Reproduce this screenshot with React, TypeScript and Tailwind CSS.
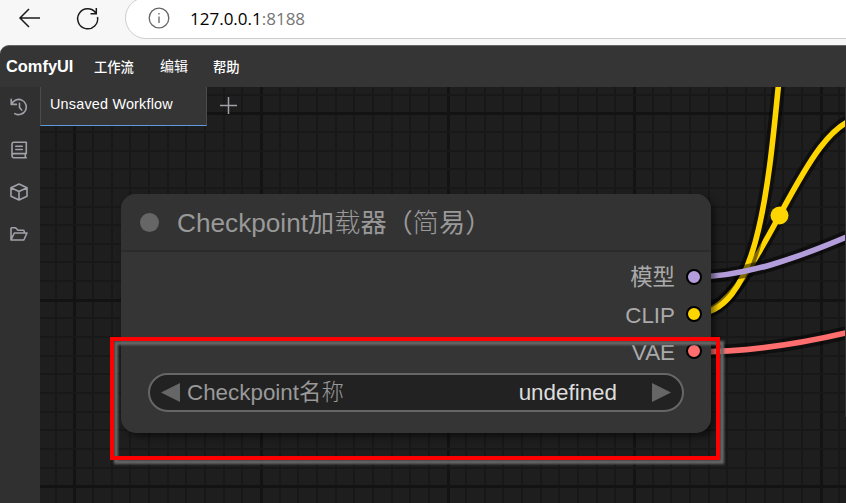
import type { ReactNode } from "react";

const CELL = 18.66;

function range(from: number, to: number) {
  return Array.from({ length: to - from + 1 }, (_, i) => from + i);
}

function Canvas() {
  return (
    <svg className="absolute inset-0" width="846" height="416" viewBox="0 87 846 416" fill="none">
      {range(-2, 42).map((i) => (
        <rect key={`v${i}`} x={Math.round(73.3 + i * CELL)} y="87" width={i % 10 === 0 ? 3 : 2} height="416" fill={i % 10 === 0 ? "#131313" : "#181818"} />
      ))}
      {range(-1, 21).map((i) => (
        <rect key={`h${i}`} x="0" y={Math.round(112.2 + i * CELL)} width="846" height={i % 10 === 0 ? 3 : 2} fill={i % 10 === 0 ? "#131313" : "#181818"} />
      ))}
      <Link d="M694 314 C759 314 800 117 865 117" color="#ffd500" />
      <circle cx="779.5" cy="215.5" r="9" fill="#ffd500" />
      <Link d="M694 314 C818 314 740 -150 862 -150" color="#ffd500" />
      <Link d="M694 277 C745 277 797 258 850 235.5" color="#b39ddb" />
      <Link d="M694 352 C750 352 800 344 850 332" color="#ff6e6e" />
      <rect x="845" y="87" width="1" height="330" fill="#333" />
    </svg>
  );
}

function Link({ d, color }: { d: string; color: string }) {
  return (
    <>
      <path d={d} stroke="#000" strokeOpacity="0.5" strokeWidth="13" />
      <path d={d} stroke={color} strokeWidth="5.6" />
    </>
  );
}

function Icon({ children }: { children: ReactNode }) {
  return (
    <svg width="18" height="18" viewBox="0 0 18 18" fill="none" stroke="#a1a1aa" strokeWidth="1.6" strokeLinecap="round" strokeLinejoin="round">
      {children}
    </svg>
  );
}

function Output({ label, dot }: { label: string; dot: string }) {
  return (
    <div className="flex h-[37.4px] items-center justify-end gap-[11px] pr-[9px] text-[22.4px] leading-none text-[#aaa]">
      <span className="pt-[4px]">{label}</span>
      <span className={`size-4 rounded-full border-2 border-black ${dot}`} />
    </div>
  );
}

function Node() {
  return (
    <div className="absolute left-[121px] top-[107px] flex h-[239px] w-[590px] flex-col overflow-hidden rounded-[15px] bg-[#353535]">
      <div className="flex h-[58px] shrink-0 items-center border-b-2 border-[#2b2b2b] bg-[#333] pl-[19px]">
        <span className="size-[19px] rounded-full bg-[#666]" />
        <span className="ml-[18px] whitespace-nowrap pt-[3px] text-[26.2px] leading-none text-[#999]">
          Checkpoint加<span className="font-light">载</span>器（<span className="font-light">简</span>易）
        </span>
      </div>
      <div className="flex flex-col pt-[6px]">
        <Output label="模型" dot="bg-[#b39ddb]" />
        <Output label="CLIP" dot="bg-[#ffd500]" />
        <Output label="VAE" dot="bg-[#ff6e6e]" />
      </div>
      <div className="ml-[27px] mt-[3px] flex h-[39px] w-[536px] items-center rounded-full border-2 border-[#666] bg-[#222] px-[11px] text-[22.4px] leading-none">
        <svg width="19" height="19" viewBox="0 0 19 19"><path d="M0 9.5 19 0V19Z" fill="#666" /></svg>
        <span className="ml-[7px] pt-[2px] text-[#999]">Checkpoint名<span className="font-light">称</span></span>
        <span className="ml-auto mr-[35px] pt-[2px] text-[#ddd]">undefined</span>
        <svg width="19" height="19" viewBox="0 0 19 19"><path d="M19 9.5 0 0V19Z" fill="#666" /></svg>
      </div>
    </div>
  );
}

export default function App() {
  return (
    <div className="flex h-[503px] w-[846px] flex-col overflow-hidden bg-[#f7f7f7] font-['Liberation_Sans','Noto_Sans_CJK_SC',sans-serif]">
      <div className="flex h-[45px] shrink-0 overflow-hidden">
        <svg className="shrink-0" width="125" height="40" fill="none" stroke="#1b1b1b" strokeWidth="1.5">
          <path d="M40 18H20M29 9 20 18l9 9" />
          <path d="M95.8 13A10 10 0 1 0 97.5 17M96.3 8v5.7h-5.8" />
        </svg>
        <div className="-mt-[3px] flex h-[42px] w-[760px] shrink-0 items-center rounded-l-full border border-[#cecece] bg-white pl-[22px]">
          <svg width="22" height="22" viewBox="0 0 22 22" fill="none" stroke="#666" strokeWidth="1.3">
            <circle cx="11" cy="11" r="9.8" /><path d="M11 9.5V16M11 6v1.6" />
          </svg>
          <span className="ml-5 pt-px font-['Open_Sans',sans-serif] text-[17px] text-black">127.0.0.1<span className="text-[#767676]">:8188</span></span>
        </div>
      </div>
      <div className="flex h-[42px] shrink-0 items-center rounded-tl-[9px] border-t border-[#666] bg-[#353535] pl-[6px] text-[13.3px] text-white">
        <span className="w-[88px] text-[16.4px] font-bold">ComfyUI</span>
        <span className="w-[66px] pt-[2px] font-medium">工作流</span>
        <span className="w-[53px] text-[14px]">编辑</span>
        <span className="pt-[2px] font-medium">帮助</span>
      </div>
      <div className="relative flex h-[416px] shrink-0 bg-[#1e1e1e]">
        <Canvas />
        <div className="relative flex w-10 flex-col items-center gap-[24.3px] bg-[#303030] pr-[2px] pt-[11.3px]">
          <Icon><path d="M1.2 1.2v5.2h5.2M1.6 6.2A7.6 7.6 0 1 1 4.8 15.6M9.5 5.3v4.2l2.2 2.6" /></Icon>
          <Icon><path d="M2 14.6V3.3Q2 1.2 3.8 1.2H16.3V12.6H3.8Q2 12.6 2 14.6T3.8 16.7H16.3M15.3 13v3.5M5.8 5.3h6.5M5.8 8.5h6.5" /></Icon>
          <Icon><path d="M9 1 17 4.7v8.6L9 17 1 13.3V4.7ZM1 4.7 9 8.4l8-3.7M9 8.4V17" /></Icon>
          <Icon><path d="M1 15V3.5Q1 2.7 1.8 2.7H5.5l2.5 2.6h5.2q1 0 1 1V8M1 15 4.3 8H17l-3.2 7Z" /></Icon>
        </div>
        <div className="relative flex h-[39px] w-[167px] items-start whitespace-nowrap border-x border-b border-x-[#4b4b4b] border-b-[#5e9be0] bg-[#353535] pl-[9px] pt-[7px] text-[14.4px] leading-5 tracking-[0.2px] text-white">Unsaved Workflow</div>
        <svg className="relative ml-[12px] mt-[9px]" width="19" height="19" fill="none" stroke="#a1a1aa" strokeWidth="1.5"><path d="M9.5 1v17M1 9.5h17" /></svg>
        <div className="absolute left-[121px] top-[107px] h-[239px] w-[590px] rounded-[15px] shadow-[4px_4px_6px_rgba(0,0,0,0.5)]" />
        <Node />
        <div className="absolute left-[110px] top-[250px] h-[123px] w-[610px] border-4 border-[#ff0000] drop-shadow-[4px_4px_1px_#666]" />
      </div>
    </div>
  );
}
